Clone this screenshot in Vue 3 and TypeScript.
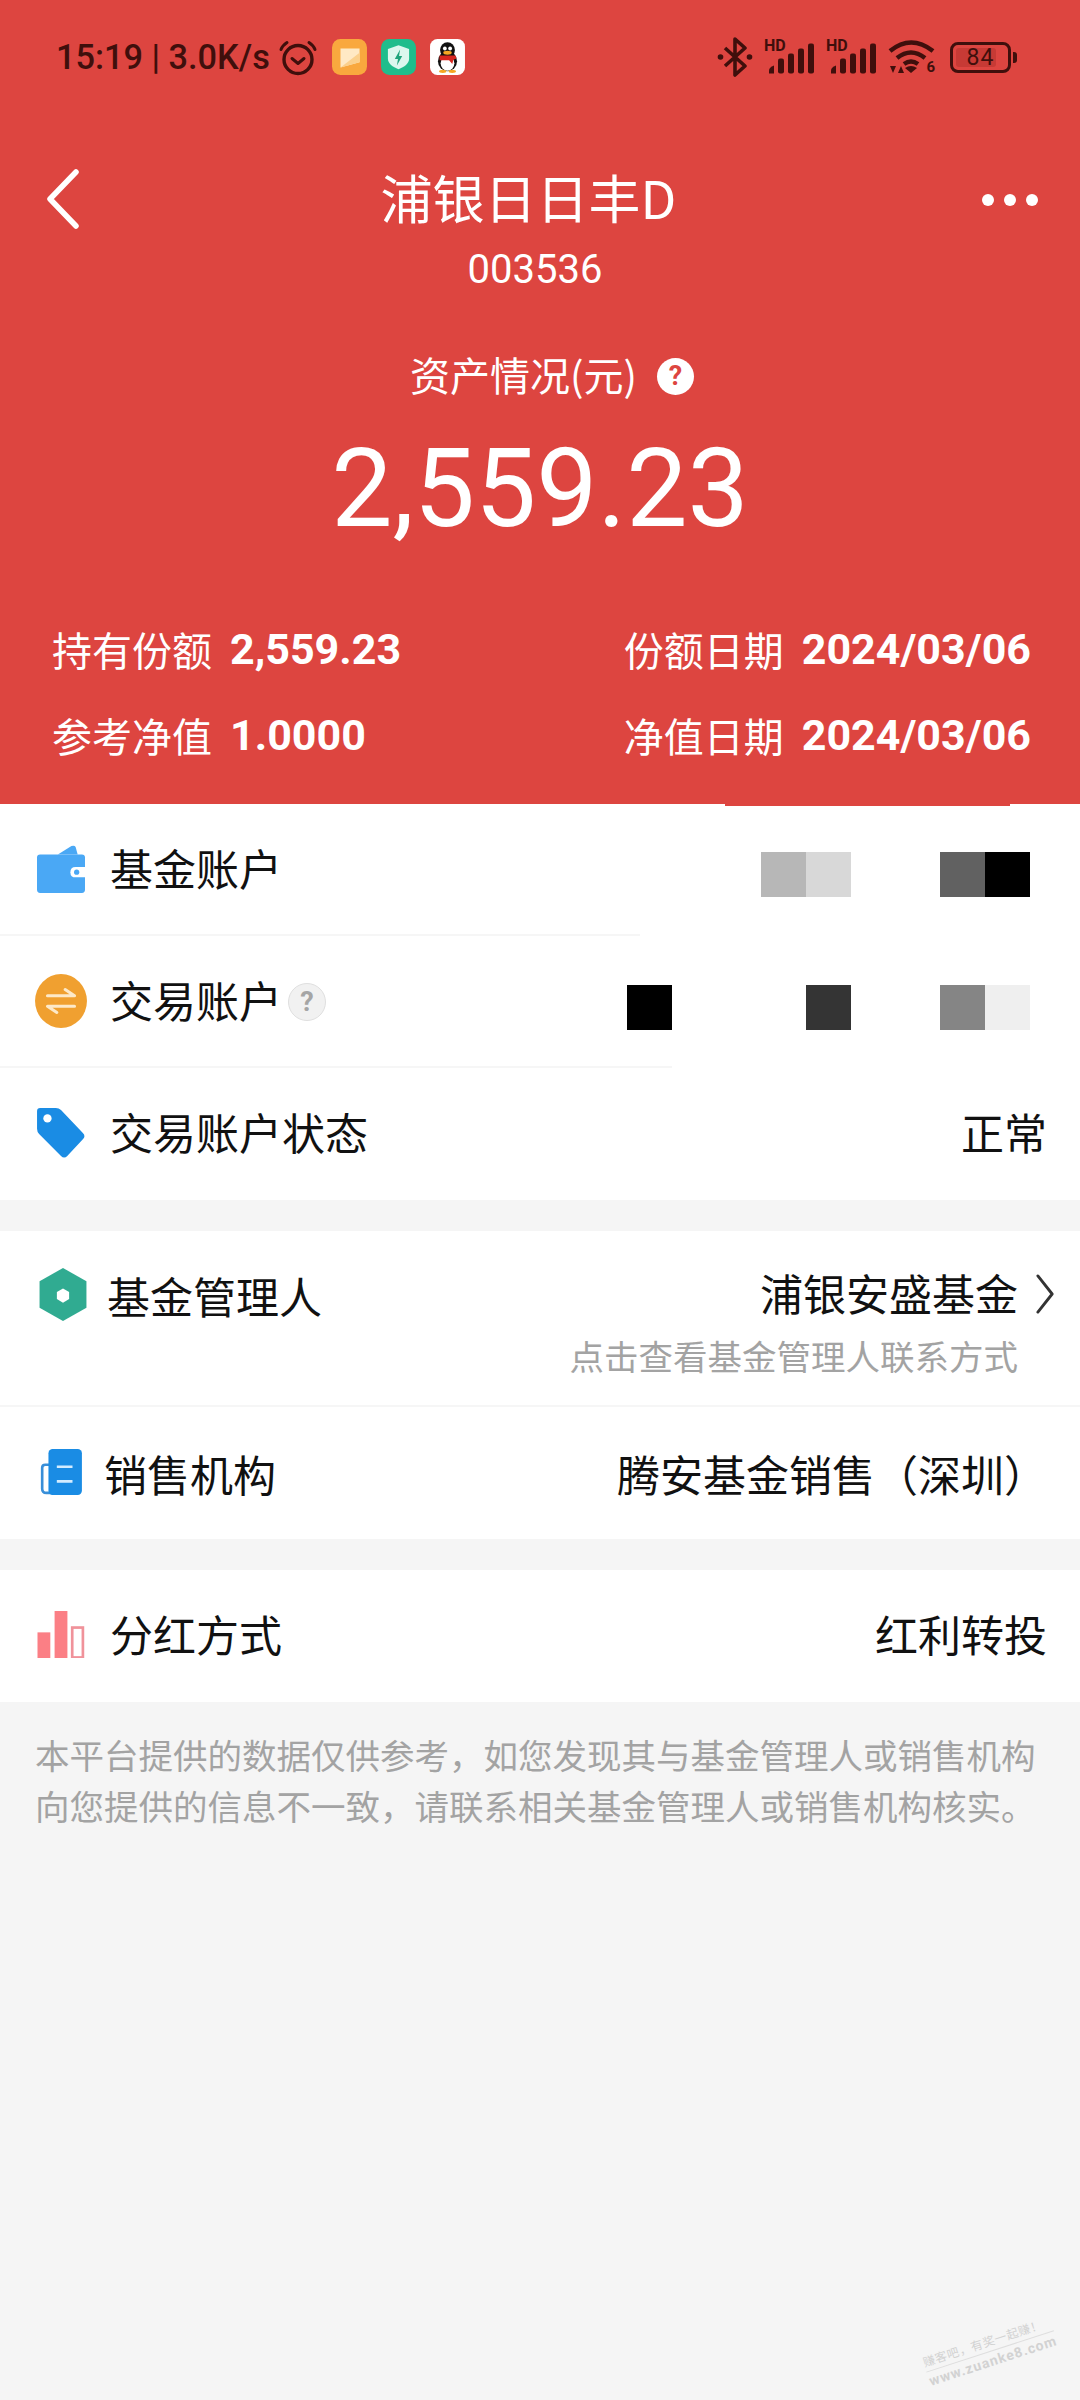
<script setup lang="ts">
const mosaicOne: string[] = ['#b7b7b7', '#d8d8d8', '', '', '#616161', '#000000']
const mosaicTwo: string[] = ['#000000', '', '', '', '#343434', '', '', '#858585', '#efefef']

const stats = [
  [
    { label: '持有份额', value: '2,559.23' },
    { label: '份额日期', value: '2024/03/06' },
  ],
  [
    { label: '参考净值', value: '1.0000' },
    { label: '净值日期', value: '2024/03/06' },
  ],
]
</script>

<template>
  <div class="page">
    <header class="hero">
      <div class="status">
        <div class="status-left">
          <span class="clock">15:19 | 3.0K/s</span>
          <svg class="alarm" width="38" height="37" viewBox="0 0 38 36" fill="none" stroke="#3f0f0c">
            <circle cx="19" cy="20" r="14" stroke-width="3.4" />
            <path d="M13 19l6 5 6-5" stroke-width="3" stroke-linecap="round" stroke-linejoin="round" />
            <path d="M2 10c1-3 3-5 6-7M36 10c-1-3-3-5-6-7" stroke-width="3" stroke-linecap="round" />
          </svg>
          <svg class="app" width="35" height="36" viewBox="0 0 33 34">
            <rect width="33" height="34" rx="8" fill="#f9a83e" />
            <path d="M8 9h18v13l-18 5z" fill="#ffe9c4" />
            <path d="M8 27l18-14v9z" fill="#fbd08c" />
          </svg>
          <svg class="app" width="35" height="36" viewBox="0 0 33 34">
            <rect width="33" height="34" rx="8" fill="#1fbd8c" />
            <path d="M16.500 6l10 3.500v9c0 5-4.500 8-10 10-5.500-2-10-5-10-10v-9z" fill="#dcf7ee" />
            <path d="M18 10l-5 9h3l-1 6 5-9h-3z" fill="#1fa37b" />
          </svg>
          <svg class="app" width="35" height="36" viewBox="0 0 33 34">
            <rect width="33" height="34" rx="7" fill="#fff" />
            <ellipse cx="16.500" cy="21" rx="9" ry="9.500" fill="#111" />
            <ellipse cx="16.500" cy="10.500" rx="7" ry="7.500" fill="#111" />
            <ellipse cx="16.500" cy="23" rx="6.500" ry="7" fill="#fff" />
            <circle cx="14" cy="9" r="1.800" fill="#fff" />
            <circle cx="19" cy="9" r="1.800" fill="#fff" />
            <ellipse cx="16.500" cy="13" rx="4" ry="1.800" fill="#f5a623" />
            <path d="M9 15.500h15l1 3-3 1-1 4-3-3.500H9z" fill="#d8261f" />
            <ellipse cx="12" cy="30.500" rx="3.500" ry="1.500" fill="#f5a623" />
            <ellipse cx="21" cy="30.500" rx="3.500" ry="1.500" fill="#f5a623" />
          </svg>
        </div>
        <div class="status-right">
          <svg width="36" height="40" viewBox="0 0 36 40" fill="none" stroke="#3f0f0c">
            <path d="M8 11l20 18-10 9V2l10 9-20 18" stroke-width="3.600" stroke-linejoin="round" />
            <circle cx="3.500" cy="20" r="2.800" fill="#3f0f0c" stroke="none" />
            <circle cx="32.500" cy="20" r="2.800" fill="#3f0f0c" stroke="none" />
          </svg>
          <div v-for="n in 2" :key="n" class="signal">
            <span class="hd">HD</span>
            <svg width="48" height="31" viewBox="0 0 48 30" fill="#3f0f0c">
              <path d="M2 30v-3q0-3 5-5v8z" />
              <rect x="11" y="15" width="6" height="15" rx="2" />
              <rect x="21" y="10" width="6" height="20" rx="2" />
              <rect x="31" y="5" width="6" height="25" rx="2" />
              <rect x="41" y="0" width="6" height="30" rx="2" />
            </svg>
          </div>
          <div class="wifi">
            <svg width="47" height="36" viewBox="0 0 47 36" fill="none" stroke="#3f0f0c" stroke-width="4.500">
              <path d="M2 12q21-17 43 0M9 19q14-11 28 0M16 25q7-5 14 0" />
              <path d="M23 34l-6-5q6-4 12 0z" fill="#3f0f0c" stroke="none" />
              <path d="M2 27h6l-3 7zM10 34h6l-3-7z" fill="#3f0f0c" stroke="none" />
            </svg>
            <span class="wifi-num">6</span>
          </div>
          <div class="battery">
            <div class="battery-body"><span class="battery-fill"></span><span class="battery-num">84</span></div>
            <span class="battery-nub"></span>
          </div>
        </div>
      </div>

      <div class="nav">
        <svg class="back" width="32" height="60" viewBox="0 0 32 60" fill="none" stroke="#fff" stroke-width="5.500" stroke-linecap="round" stroke-linejoin="round">
          <path d="M29 3L3 30l26 27" />
        </svg>
        <h1 class="title">浦银日日丰D</h1>
        <div class="more"><i></i><i></i><i></i></div>
      </div>
      <div class="code">003536</div>

      <div class="assets">
        <span>资产情况(元)</span>
        <span class="help">?</span>
      </div>
      <div class="amount">2,559.23</div>

      <div class="stats">
        <div v-for="(row, i) in stats" :key="i" class="stat-row">
          <div v-for="cell in row" :key="cell.label" class="stat">
            <span class="stat-label">{{ cell.label }}</span>
            <span class="stat-value">{{ cell.value }}</span>
          </div>
        </div>
      </div>
      <div class="sliver"></div>
    </header>

    <section class="group">
      <div class="row line-short">
        <svg class="icon" width="49" height="48" viewBox="0 0 46 46">
          <path d="M20 9L33 1q3-1 4 1l2 7z" fill="#4aa8f5" />
          <path d="M0 12q0-3 3-3h40q3 0 3 3v31q0 3-3 3H3q-3 0-3-3z" fill="#4aa8f5" />
          <path d="M46 21H37q-5 0-5 5t5 5h9z" fill="#fff" />
          <circle cx="38" cy="26" r="2.500" fill="#4aa8f5" />
        </svg>
        <span class="label">基金账户</span>
        <div class="mosaic mosaic-top">
          <span v-for="(c, i) in mosaicOne" :key="i" class="cell" :style="{ background: c }"></span>
        </div>
      </div>
      <div class="row line-mid">
        <svg class="icon" width="52" height="54" viewBox="0 0 50 52">
          <ellipse cx="25" cy="26" rx="25" ry="26" fill="#f0a030" />
          <path d="M12 21h26l-9-6M38 31H12l9 6" fill="none" stroke="#fde9c8" stroke-width="3" stroke-linecap="round" stroke-linejoin="round" />
        </svg>
        <span class="label">交易账户</span>
        <span class="hint">?</span>
        <div class="mosaic">
          <span v-for="(c, i) in mosaicTwo" :key="i" class="cell" :style="{ background: c }"></span>
        </div>
      </div>
      <div class="row">
        <svg class="icon" width="48" height="50" viewBox="0 0 46 48">
          <path d="M3 0h15q3 0 5 2l21 22q3 3 0 6L29 46q-3 3-6 0L2 25q-2-2-2-5V3q0-3 3-3z" fill="#1a8ce4" />
          <circle cx="10" cy="10" r="4" fill="#fff" />
        </svg>
        <span class="label">交易账户状态</span>
        <span class="value">正常</span>
      </div>
    </section>

    <section class="group">
      <div class="row row-manager line-full">
        <svg class="icon icon-manager" width="46" height="53" viewBox="0 0 46 52">
          <path d="M23 0l23 13v26L23 52 0 39V13z" fill="#30ab91" />
          <path d="M23 20l6 3.500v7L23 34l-6-3.500v-7z" fill="#fff" />
        </svg>
        <span class="label label-manager">基金管理人</span>
        <div class="manager-info">
          <div class="manager-name">
            <span class="value">浦银安盛基金</span>
            <svg width="21" height="40" viewBox="0 0 20 42" fill="none" stroke="#333" stroke-width="3" stroke-linecap="round" stroke-linejoin="round">
              <path d="M2 2l15 19L2 40" />
            </svg>
          </div>
          <div class="manager-sub">点击查看基金管理人联系方式</div>
        </div>
      </div>
      <div class="row row-org">
        <svg class="icon" width="42" height="46" viewBox="0 0 40 44">
          <path d="M9 15H5q-3 0-3 3v20q0 4 4 4h6" fill="none" stroke="#3a8fd8" stroke-width="2.500" />
          <rect x="8" y="0" width="32" height="44" rx="4" fill="#1a8ce4" />
          <path d="M16 17h15M16 31h15" stroke="#d3ecff" stroke-width="2.500" />
        </svg>
        <span class="label label-org">销售机构</span>
        <span class="value">腾安基金销售（深圳）</span>
      </div>
    </section>

    <section class="group">
      <div class="row">
        <svg class="icon" width="46" height="47" viewBox="0 0 44 44" fill="#fb7f85">
          <rect x="0" y="20" width="12" height="24" />
          <rect x="16" y="0" width="12" height="44" />
          <rect x="32.500" y="15.500" width="10" height="28" fill="none" stroke="#f0929a" stroke-width="2.500" />
        </svg>
        <span class="label">分红方式</span>
        <span class="value">红利转投</span>
      </div>
    </section>

    <p class="note">本平台提供的数据仅供参考，如您发现其与基金管理人或销售机构向您提供的信息不一致，请联系相关基金管理人或销售机构核实。</p>

    <div class="watermark">
      <div class="wm-cn">赚客吧，有奖一起赚！</div>
      <div class="wm-en">www.zuanke8.com</div>
    </div>
  </div>
</template>

<style>
html, body { margin: 0; background: #f5f5f5; }
</style>

<style scoped>
.page {
  position: relative;
  width: 1080px;
  height: 2400px;
  overflow: hidden;
  background: #f5f5f5;
  color: #111;
  font-family: "Noto Sans CJK SC", Roboto, sans-serif;
}

.hero {
  position: relative;
  height: 804px;
  box-sizing: border-box;
  padding-top: 38px;
  background: #dd4540;
  color: #fff;
}

.status {
  display: flex;
  justify-content: space-between;
  align-items: center;
  height: 38px;
  padding: 0 63px 0 56px;
  color: #3f0f0c;
}
.status-left, .status-right { display: flex; align-items: center; }
.status-right { gap: 11px; }
.clock {
  font-family: Roboto, sans-serif;
  font-size: 34.300px;
  font-weight: 500;
  white-space: nowrap;
}
.alarm { margin-left: 9px; margin-right: 15px; }
.app { margin-right: 14px; }
.signal {
  position: relative;
  width: 51px;
  height: 34px;
  display: flex;
  justify-content: flex-end;
  align-items: flex-end;
}
.hd {
  position: absolute;
  left: 0;
  top: -2px;
  font: 700 16px/16px Roboto, sans-serif;
}
.wifi { position: relative; width: 47px; height: 36px; }
.wifi svg { display: block; }
.wifi-num {
  position: absolute;
  right: 0;
  bottom: 0;
  font: 700 15px/15px Roboto, sans-serif;
}
.battery { display: flex; align-items: center; gap: 2px; margin-left: 4px; }
.battery-body {
  position: relative;
  width: 61px;
  height: 31px;
  box-sizing: border-box;
  border: 3.500px solid #3f0f0c;
  border-radius: 8px;
  display: flex;
  align-items: center;
  justify-content: center;
}
.battery-fill {
  position: absolute;
  left: 3px;
  top: 3px;
  bottom: 3px;
  width: 40px;
  border-radius: 3px;
  background: #c73a35;
}
.battery-num {
  position: relative;
  font: 400 23px/23px Roboto, sans-serif;
  letter-spacing: 1px;
}
.battery-nub { width: 4px; height: 11px; border-radius: 0 3px 3px 0; background: #3f0f0c; }

.nav {
  display: grid;
  grid-template-columns: 1fr auto 1fr;
  align-items: center;
  height: 60px;
  margin-top: 91px;
  padding: 0 42px 0 47px;
}
.back { display: block; }
.title {
  margin: 0 28px 4px 0;
  font-size: 52px;
  font-weight: 400;
  line-height: 60px;
  white-space: nowrap;
}
.more { display: flex; justify-content: flex-end; gap: 10px; margin-top: 2px; }
.more i { width: 12px; height: 12px; border-radius: 50%; background: #fff; }

.code {
  margin-top: 18px;
  padding-right: 10px;
  text-align: center;
  font-family: Roboto, sans-serif;
  font-size: 40px;
  line-height: 50px;
}

.assets {
  display: flex;
  justify-content: center;
  align-items: center;
  gap: 20px;
  margin-top: 54px;
  padding-left: 24px;
  font-size: 40px;
  line-height: 50px;
}
.help {
  width: 37px;
  height: 37px;
  margin-top: 5px;
  border-radius: 50%;
  background: #fff;
  color: #dd4540;
  text-align: center;
  font: 700 27px/37px Roboto, sans-serif;
}

.amount {
  margin-top: 25px;
  text-align: center;
  font-family: Roboto, sans-serif;
  font-size: 109px;
  line-height: 130px;
}

.stats { margin-top: 65px; padding: 0 49px 0 52px; }
.stat-row { display: flex; justify-content: space-between; height: 86px; }
.stat { display: flex; align-items: center; gap: 18px; height: 60px; }
.stat-label { font-size: 40px; }
.stat-value { font-family: Roboto, sans-serif; font-size: 43px; font-weight: 700; }

.sliver {
  position: absolute;
  left: 725px;
  top: 804px;
  width: 285px;
  height: 2px;
  background: #dd4540;
}

.group { margin-bottom: 31px; background: #fff; }
.row {
  display: flex;
  align-items: center;
  height: 132px;
  box-sizing: border-box;
  padding: 0 33px 0 31px;
}
.line-short, .line-mid, .line-full {
  background: linear-gradient(#f6f6f6, #f6f6f6) no-repeat 0 100%;
}
.line-short { background-size: 640px 2px; }
.line-mid { background-size: 672px 2px; }
.line-full { background-size: 100% 2px; }

.icon { flex: none; width: 60px; margin-right: 19px; margin-bottom: 3px; }
.label { padding-bottom: 6px; font-size: 43px; white-space: nowrap; }
.value { margin-left: auto; padding-bottom: 6px; font-size: 43px; white-space: nowrap; }

.hint {
  width: 38px;
  height: 38px;
  margin-left: 6px;
  box-sizing: border-box;
  border: 1px solid #dfdfdf;
  border-radius: 50%;
  background: #f1f1f1;
  color: #a5a5a5;
  text-align: center;
  font: 700 27px/36px Roboto, sans-serif;
}

.mosaic { display: flex; margin-left: auto; margin-right: 17px; margin-top: 11px; }
.mosaic-top { margin-top: 9px; }
.cell { width: 44.800px; height: 45px; }

.row-manager { align-items: flex-start; height: 176px; padding-top: 35px; padding-right: 24px; }
.icon-manager { margin: 2px 17px 0 2px; }
.label-manager { margin-left: -3px; line-height: 58px; }
.manager-info { margin-left: auto; text-align: right; }
.manager-name { display: flex; justify-content: flex-end; align-items: center; gap: 17px; height: 58px; }
.manager-name .value { margin-left: 0; }
.manager-name svg { margin-bottom: 2px; }
.manager-sub { margin-top: 6px; padding-right: 38px; font-size: 34.500px; line-height: 50px; color: #a3a3a3; }

.row-org .label, .row-org .value { padding-bottom: 0; }
.label-org { margin-left: -6px; }

.note {
  margin: -4px 0 0;
  padding: 0 33px 0 35px;
  font-size: 34.500px;
  line-height: 51px;
  color: #a3a3a3;
}

.watermark {
  position: absolute;
  right: 23px;
  bottom: 30px;
  transform: rotate(-18deg);
  color: #d2d2d2;
  white-space: nowrap;
}
.wm-cn { padding-bottom: 1px; border-bottom: 1px solid #dedede; font-size: 12px; line-height: 18px; letter-spacing: 0.5px; }
.wm-en { font: 700 14px/18px Roboto, sans-serif; letter-spacing: 1px; }
</style>
